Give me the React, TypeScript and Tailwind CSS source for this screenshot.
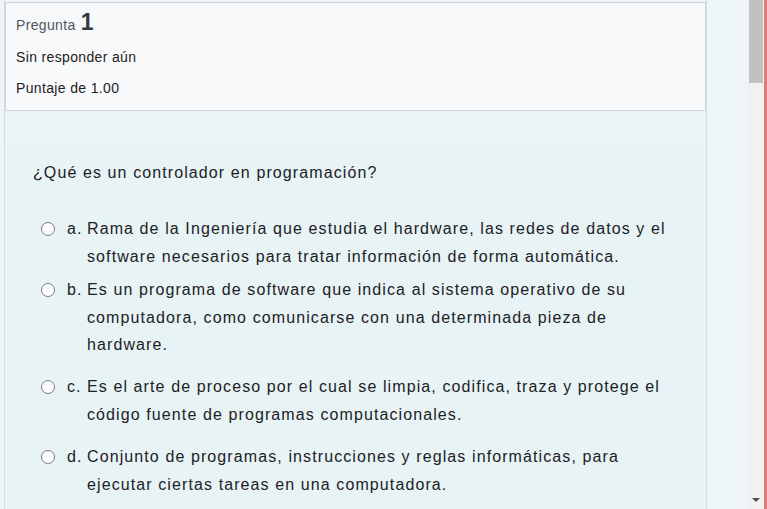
import React from "react";

const options = [
  { l: "a.", t: "Rama de la Ingeniería que estudia el hardware, las redes de datos y el software necesarios para tratar información de forma automática.", m: "mt-0" },
  { l: "b.", t: "Es un programa de software que indica al sistema operativo de su computadora, como comunicarse con una determinada pieza de hardware.", m: "mt-[6px]" },
  { l: "c.", t: "Es el arte de proceso por el cual se limpia, codifica, traza y protege el código fuente de programas computacionales.", m: "mt-[14.5px]" },
  { l: "d.", t: "Conjunto de programas, instrucciones y reglas informáticas, para ejecutar ciertas tareas en una computadora.", m: "mt-[15px]" },
];

export default function App() {
  return (
    <div
      className="w-[767px] h-[509px] flex overflow-hidden bg-[#eef5f8]"
      style={{ fontFamily: '"Liberation Sans", Arial, sans-serif' }}
    >
      <div className="w-[748px] h-full pl-[4px] flex">
        <div className="w-[703px] h-full border-x border-[#d5dde2] flex flex-col">
          <div className="mt-[2px] h-[109px] border border-[#cfd5db] bg-[#f8f9fa] px-[10px] pt-[8px] text-[#1d2125] tracking-[0.35px]">
            <div className="flex items-baseline h-[28px]">
              <span className="text-[14px] text-[#4f565c]">Pregunta</span>
              <span className="ml-[5px] text-[23px] font-bold text-[#343a40] leading-none">1</span>
            </div>
            <div className="mt-[8px] text-[14px] leading-[20px]">Sin responder aún</div>
            <div className="mt-[11px] text-[14px] leading-[20px]">Puntaje de 1.00</div>
          </div>
          <div className="h-[33px] bg-[#edf4f7]" />
          <div className="flex-1 bg-[#e7f3f5] pl-[28px] pr-[30px] pt-[17px] text-[#1d2125] tracking-[1.1px]">
            <div className="text-[16px] leading-[24px]">¿Qué es un controlador en programación?</div>
            <div className="mt-[30px]">
              {options.map((o) => (
                <div key={o.l} className={`flex text-[16px] leading-[27.5px] ${o.m}`}>
                  <div className="ml-[8px] pt-[7px] shrink-0">
                    <div className="w-[14px] h-[14px] rounded-full border border-[#7a7a7a] bg-white" />
                  </div>
                  <span className="ml-[12px] w-[20px] shrink-0">{o.l}</span>
                  <span className="flex-1">{o.t}</span>
                </div>
              ))}
            </div>
          </div>
        </div>
      </div>
      <div className="w-[16px] h-full bg-[#f1f1f1] relative">
        <div className="ml-[1px] w-[14px] h-[83px] bg-[#c1c1c1]" />
        <svg className="absolute left-[4px] bottom-[7px]" width="8" height="4" viewBox="0 0 8 4">
          <polygon points="0,0 8,0 4,4" fill="#505050" />
        </svg>
      </div>
      <div className="w-[3px] h-full bg-[#e07b7b]" />
    </div>
  );
}
